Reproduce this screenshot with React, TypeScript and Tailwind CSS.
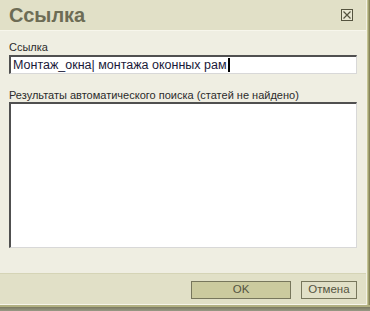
export default function App() {
  return (
    <div
      className="flex h-[311px] w-[370px] flex-col overflow-hidden bg-[#efeee2]"
      style={{ fontFamily: '"Liberation Sans", Arial, sans-serif' }}
    >
      <div className="flex min-h-0 flex-1">
        <div className="flex min-w-0 flex-1 flex-col">
          <header className="flex h-[31px] items-center justify-between border-b border-[#f7f6ec] bg-[#e1e0c7] pl-[9px] pr-[13px]">
            <h1 className="text-[20px] font-bold leading-none text-[#6d6c55]">
              Ссылка
            </h1>
            <button
              type="button"
              aria-label="Закрыть"
              className="flex h-[12px] w-[12px] items-center justify-center border border-[#55543f] bg-[#e8e7d2]"
            >
              <svg width="8" height="8" viewBox="0 0 8 8">
                <path d="M0.5 0.5 L7.5 7.5 M7.5 0.5 L0.5 7.5" stroke="#55543f" strokeWidth="1.2" />
              </svg>
            </button>
          </header>

          <main className="flex min-h-0 flex-1 flex-col px-[9px] pt-[9px] text-[#222]">
            <label className="text-[11px] leading-[14px] text-[#2b2b2b]">Ссылка</label>
            <div className="mt-[1px] flex h-[19px] items-center border-t-2 border-l-2 border-r border-b border-t-[#505050] border-l-[#505050] border-r-[#d8d8d8] border-b-[#d8d8d8] bg-white pl-[2px] text-[12.5px] text-[#1a1a3a]">
              <span>Монтаж_окна| монтажа оконных рам</span>
              <span className="ml-[1px] h-[14px] w-[2px] bg-black" />
            </div>

            <label className="mt-[14px] text-[11px] leading-[14px] text-[#2b2b2b]">
              Результаты автоматического поиска (статей не найдено)
            </label>
            <div className="h-[146px] border-t-2 border-l-2 border-r border-b border-t-[#505050] border-l-[#505050] border-r-[#d8d8d8] border-b-[#d8d8d8] bg-white" />
          </main>

          <footer className="flex h-[32px] items-start justify-end gap-[10px] border-t border-b border-t-[#d5d4b6] border-b-[#f7f6ec] bg-[#e1e0c7] pr-[9px] pt-[7px]">
            <button
              type="button"
              className="h-[18px] w-[100px] border border-[#77765c] bg-[#cbca9e] text-[11.5px] font-normal leading-none text-[#55543f]"
            >
              OK
            </button>
            <button
              type="button"
              className="h-[18px] w-[56px] border border-[#77765c] bg-[#e1e0c7] text-[11.5px] font-normal leading-none text-[#55543f]"
            >
              Отмена
            </button>
          </footer>
        </div>
        <div className="flex w-[4px]">
          <div className="w-[1px] bg-[#f2f1e4]" />
          <div className="w-[1px] bg-[#c4c395]" />
          <div className="w-[1px] bg-[#a3a272]" />
          <div className="w-[1px] bg-[#85845a]" />
        </div>
      </div>
      <div className="h-[2px] bg-[#b2b182]" />
      <div className="h-[4px] bg-gradient-to-b from-[#7a7960] to-[#9a9a86]" />
    </div>
  );
}
